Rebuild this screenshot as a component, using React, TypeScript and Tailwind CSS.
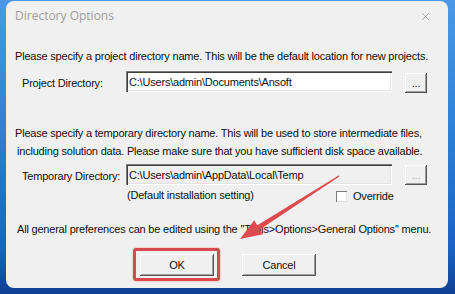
import { X } from 'lucide-react'

const ui = "font-['Liberation_Sans',Arial,sans-serif] text-[11px] tracking-[-0.2px] leading-[14px] text-[#111] whitespace-nowrap"

function ClassicButton({ label, disabled = false, className = '' }: { label: string; disabled?: boolean; className?: string }) {
  return (
    <div
      className={`shrink-0 flex items-center justify-center bg-[#f0f0f0] shadow-[inset_-1px_-1px_#555,inset_1px_1px_#fff,inset_-2px_-2px_#a0a0a0] ${disabled ? 'text-[#a8a8a8]' : 'text-[#111]'} ${className}`}
    >
      {label}
    </div>
  )
}

function PathBox({ value, disabled = false }: { value: string; disabled?: boolean }) {
  return (
    <div
      className={`shrink-0 w-[266px] h-[21px] flex items-center pl-[3px] shadow-[inset_1px_1px_#7a7a7a,inset_2px_2px_#404040,inset_-1px_-1px_#fff,inset_-2px_-2px_#e3e3e3] ${disabled ? 'bg-[#f0f0f0]' : 'bg-white'}`}
    >
      {value}
    </div>
  )
}

export default function App() {
  return (
    <div className="relative w-[455px] h-[294px] overflow-hidden bg-[linear-gradient(180deg,#4b98e6_0%,#2d7fd9_45%,#1a62c4_85%,#0f3f94_100%)] pl-[6px] pt-[1px]">
      <div className={`w-[442px] h-[287px] bg-[#f0f0f0] rounded-[8px] flex flex-col ${ui}`}>
        {/* title bar */}
        <div className="shrink-0 h-[30px] flex items-center justify-between pl-[9px] pr-[16px]">
          <span className="font-['Open_Sans',sans-serif] text-[12px] tracking-normal text-[#9e9e9e]">Directory Options</span>
          <X size={13} strokeWidth={1.2} className="text-[#8a8a8a]" />
        </div>

        <div className="flex flex-col px-[9px]">
          <p className="mt-[18px]">Please specify a project directory name. This will be the default location for new projects.</p>

          <div className="mt-[8px] flex items-start pl-[7px]">
            <span className="shrink-0 w-[104px] h-[21px] flex items-center pt-[2px]">Project Directory:</span>
            <PathBox value="C:\Users\admin\Documents\Ansoft" />
            <ClassicButton label="..." className="ml-[13px] mt-[2px] w-[22px] h-[20px]" />
          </div>

          <div className="mt-[31px] leading-[18px]">
            <p>Please specify a temporary directory name. This will be used to store intermediate files,</p>
            <p className="pl-[2px]">including solution data. Please make sure that you have sufficient disk space available.</p>
          </div>

          <div className="mt-[4px] flex items-start pl-[7px]">
            <span className="shrink-0 w-[104px] h-[21px] flex items-center pt-[2px]">Temporary Directory:</span>
            <PathBox value="C:\Users\admin\AppData\Local\Temp" disabled />
            <ClassicButton label="..." disabled className="ml-[13px] mt-[1px] w-[22px] h-[20px]" />
          </div>

          <div className="mt-[2px] flex items-center pl-[112px]">
            <span className="shrink-0 w-[209px]">(Default installation setting)</span>
            <span className="shrink-0 w-[11px] h-[11px] mt-[3px] bg-white shadow-[inset_1px_1px_#7a7a7a,inset_-1px_-1px_#e3e3e3]" />
            <span className="ml-[6px] mt-[2px]">Override</span>
          </div>

          <p className="mt-[19px] pl-[2px]">All general preferences can be edited using the ''Tools&gt;Options&gt;General Options'' menu.</p>

          <div className="mt-[18px] flex justify-center gap-[28px] pl-[2px]">
            <div className="relative">
              <ClassicButton label="OK" className="w-[74px] h-[22px]" />
              <div className="absolute left-[-7px] right-[-6px] top-[-6px] bottom-[-5px] rounded-[3px] border-[3px] border-[#d9484d] shadow-[0_0_2px_#e88]" />
            </div>
            <ClassicButton label="Cancel" className="w-[74px] h-[22px]" />
          </div>
        </div>
      </div>

      {/* annotation arrow */}
      <svg className="absolute inset-0 pointer-events-none" width="455" height="294" viewBox="0 0 455 294">
        <polygon
          points="339.4,176.5 259.9,229.4 263,234.3 240,239 254.2,220.3 257.3,225.2 338.6,175.5"
          fill="#dd4a50"
        />
      </svg>
    </div>
  )
}
